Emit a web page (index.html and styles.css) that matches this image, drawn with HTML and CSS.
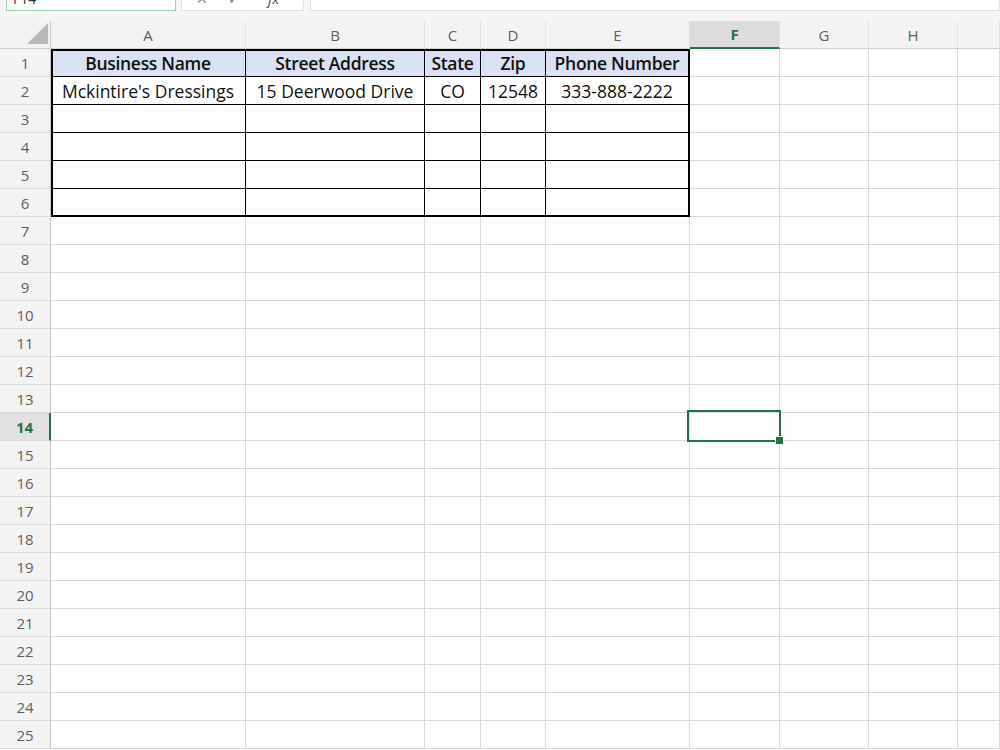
FILE: index.html
```html
<!DOCTYPE html>
<html lang="en">
    <head>
        <meta name="viewport" content="width=device-width, initial-scale=1">
        <title>Book1 - Excel</title>
        <link rel="stylesheet" href="styles.css">
    </head>
    <body>
        <div class="formulaBar">
            <div class="nameBox">F14</div>
            <div class="fxBox"><span>&#x2715;</span><span>&#x2713;</span><span class="fx">fx</span></div>
            <div class="formulaInput"></div>
        </div>
        <div class="sheet">
            <div class="row colHeads">
                <div class="c rh corner">
                    <svg width="21" height="21" viewBox="0 0 21 21"><polygon points="21,0 21,21 0,21" fill="#b9b9b9"/></svg>
                </div>
                <div class="c a">A</div>
                <div class="c b">B</div>
                <div class="c cc">C</div>
                <div class="c d">D</div>
                <div class="c e">E</div>
                <div class="c f active">F</div>
                <div class="c g">G</div>
                <div class="c h">H</div>
                <div class="c i"></div>
            </div>
            <div class="row">
                <div class="c rh">1</div>
                <div class="c a t head top first">Business Name</div>
                <div class="c b t head top">Street Address</div>
                <div class="c cc t head top">State</div>
                <div class="c d t head top">Zip</div>
                <div class="c e t head top last">Phone Number</div>
                <div class="c f"></div><div class="c g"></div><div class="c h"></div><div class="c i"></div>
            </div>
            <div class="row">
                <div class="c rh">2</div>
                <div class="c a t first">Mckintire's Dressings</div>
                <div class="c b t">15 Deerwood Drive</div>
                <div class="c cc t">CO</div>
                <div class="c d t">12548</div>
                <div class="c e t last">333-888-2222</div>
                <div class="c f"></div><div class="c g"></div><div class="c h"></div><div class="c i"></div>
            </div>
            <div class="row">
                <div class="c rh">3</div>
                <div class="c a t first"></div><div class="c b t"></div><div class="c cc t"></div><div class="c d t"></div><div class="c e t last"></div>
                <div class="c f"></div><div class="c g"></div><div class="c h"></div><div class="c i"></div>
            </div>
            <div class="row">
                <div class="c rh">4</div>
                <div class="c a t first"></div><div class="c b t"></div><div class="c cc t"></div><div class="c d t"></div><div class="c e t last"></div>
                <div class="c f"></div><div class="c g"></div><div class="c h"></div><div class="c i"></div>
            </div>
            <div class="row">
                <div class="c rh">5</div>
                <div class="c a t first"></div><div class="c b t"></div><div class="c cc t"></div><div class="c d t"></div><div class="c e t last"></div>
                <div class="c f"></div><div class="c g"></div><div class="c h"></div><div class="c i"></div>
            </div>
            <div class="row">
                <div class="c rh">6</div>
                <div class="c a t first bottom"></div><div class="c b t bottom"></div><div class="c cc t bottom"></div><div class="c d t bottom"></div><div class="c e t last bottom"></div>
                <div class="c f"></div><div class="c g"></div><div class="c h"></div><div class="c i"></div>
            </div>
            <div class="row">
                <div class="c rh">7</div>
                <div class="c a"></div><div class="c b"></div><div class="c cc"></div><div class="c d"></div><div class="c e"></div>
                <div class="c f"></div><div class="c g"></div><div class="c h"></div><div class="c i"></div>
            </div>
            <div class="row">
                <div class="c rh">8</div>
                <div class="c a"></div><div class="c b"></div><div class="c cc"></div><div class="c d"></div><div class="c e"></div>
                <div class="c f"></div><div class="c g"></div><div class="c h"></div><div class="c i"></div>
            </div>
            <div class="row">
                <div class="c rh">9</div>
                <div class="c a"></div><div class="c b"></div><div class="c cc"></div><div class="c d"></div><div class="c e"></div>
                <div class="c f"></div><div class="c g"></div><div class="c h"></div><div class="c i"></div>
            </div>
            <div class="row">
                <div class="c rh">10</div>
                <div class="c a"></div><div class="c b"></div><div class="c cc"></div><div class="c d"></div><div class="c e"></div>
                <div class="c f"></div><div class="c g"></div><div class="c h"></div><div class="c i"></div>
            </div>
            <div class="row">
                <div class="c rh">11</div>
                <div class="c a"></div><div class="c b"></div><div class="c cc"></div><div class="c d"></div><div class="c e"></div>
                <div class="c f"></div><div class="c g"></div><div class="c h"></div><div class="c i"></div>
            </div>
            <div class="row">
                <div class="c rh">12</div>
                <div class="c a"></div><div class="c b"></div><div class="c cc"></div><div class="c d"></div><div class="c e"></div>
                <div class="c f"></div><div class="c g"></div><div class="c h"></div><div class="c i"></div>
            </div>
            <div class="row">
                <div class="c rh">13</div>
                <div class="c a"></div><div class="c b"></div><div class="c cc"></div><div class="c d"></div><div class="c e"></div>
                <div class="c f"></div><div class="c g"></div><div class="c h"></div><div class="c i"></div>
            </div>
            <div class="row">
                <div class="c rh active">14</div>
                <div class="c a"></div><div class="c b"></div><div class="c cc"></div><div class="c d"></div><div class="c e"></div>
                <div class="c f selected"></div><div class="c g"></div><div class="c h"></div><div class="c i"></div>
            </div>
            <div class="row">
                <div class="c rh">15</div>
                <div class="c a"></div><div class="c b"></div><div class="c cc"></div><div class="c d"></div><div class="c e"></div>
                <div class="c f"></div><div class="c g"></div><div class="c h"></div><div class="c i"></div>
            </div>
            <div class="row">
                <div class="c rh">16</div>
                <div class="c a"></div><div class="c b"></div><div class="c cc"></div><div class="c d"></div><div class="c e"></div>
                <div class="c f"></div><div class="c g"></div><div class="c h"></div><div class="c i"></div>
            </div>
            <div class="row">
                <div class="c rh">17</div>
                <div class="c a"></div><div class="c b"></div><div class="c cc"></div><div class="c d"></div><div class="c e"></div>
                <div class="c f"></div><div class="c g"></div><div class="c h"></div><div class="c i"></div>
            </div>
            <div class="row">
                <div class="c rh">18</div>
                <div class="c a"></div><div class="c b"></div><div class="c cc"></div><div class="c d"></div><div class="c e"></div>
                <div class="c f"></div><div class="c g"></div><div class="c h"></div><div class="c i"></div>
            </div>
            <div class="row">
                <div class="c rh">19</div>
                <div class="c a"></div><div class="c b"></div><div class="c cc"></div><div class="c d"></div><div class="c e"></div>
                <div class="c f"></div><div class="c g"></div><div class="c h"></div><div class="c i"></div>
            </div>
            <div class="row">
                <div class="c rh">20</div>
                <div class="c a"></div><div class="c b"></div><div class="c cc"></div><div class="c d"></div><div class="c e"></div>
                <div class="c f"></div><div class="c g"></div><div class="c h"></div><div class="c i"></div>
            </div>
            <div class="row">
                <div class="c rh">21</div>
                <div class="c a"></div><div class="c b"></div><div class="c cc"></div><div class="c d"></div><div class="c e"></div>
                <div class="c f"></div><div class="c g"></div><div class="c h"></div><div class="c i"></div>
            </div>
            <div class="row">
                <div class="c rh">22</div>
                <div class="c a"></div><div class="c b"></div><div class="c cc"></div><div class="c d"></div><div class="c e"></div>
                <div class="c f"></div><div class="c g"></div><div class="c h"></div><div class="c i"></div>
            </div>
            <div class="row">
                <div class="c rh">23</div>
                <div class="c a"></div><div class="c b"></div><div class="c cc"></div><div class="c d"></div><div class="c e"></div>
                <div class="c f"></div><div class="c g"></div><div class="c h"></div><div class="c i"></div>
            </div>
            <div class="row">
                <div class="c rh">24</div>
                <div class="c a"></div><div class="c b"></div><div class="c cc"></div><div class="c d"></div><div class="c e"></div>
                <div class="c f"></div><div class="c g"></div><div class="c h"></div><div class="c i"></div>
            </div>
            <div class="row">
                <div class="c rh">25</div>
                <div class="c a"></div><div class="c b"></div><div class="c cc"></div><div class="c d"></div><div class="c e"></div>
                <div class="c f"></div><div class="c g"></div><div class="c h"></div><div class="c i"></div>
            </div>
        </div>
    </body>
</html>
```

FILE: styles.css
```css
body, html {
    padding: 0;
    margin: 0;
    background: #fff;
    overflow: hidden;
}
* {
    box-sizing: border-box;
}
.formulaBar {
    height: 21px;
    display: flex;
    align-items: flex-start;
    background: #f5f5f5;
    padding-left: 6px;
    overflow: hidden;
}
.nameBox, .fxBox, .formulaInput {
    margin-top: -14px;
    height: 25px;
    background: #fff;
    border: 1px solid #e1e1e1;
    display: flex;
    align-items: center;
    font-family: "Open Sans", sans-serif;
    font-size: 14px;
    color: #333;
    overflow: hidden;
}
.nameBox {
    width: 170px;
    border-color: #9ed3b4;
    padding-left: 6px;
}
.fxBox {
    width: 123px;
    margin-left: 5px;
    padding-left: 14px;
    gap: 20px;
    color: #8a8a8a;
}
.fxBox .fx {
    margin-left: 8px;
    font-style: italic;
    color: #444;
}
.formulaInput {
    flex: 1;
    margin-left: 6px;
}
.sheet {
    display: flex;
    flex-direction: column;
}
.row {
    display: flex;
    height: 28px;
}
.c {
    height: 28px;
    border-right: 1px solid #dadada;
    border-bottom: 1px solid #dadada;
    display: flex;
    align-items: center;
    justify-content: center;
    font-family: "Open Sans", sans-serif;
    font-size: 17.5px;
    color: #111;
    white-space: nowrap;
}
.rh {
    width: 51px;
    background: #f3f3f3;
    border-right-color: #c8c8c8;
    font-family: "Open Sans", sans-serif;
    font-size: 15px;
    color: #5e5e5e;
}
.a { width: 195px; }
.b { width: 179px; }
.cc { width: 56px; }
.d { width: 65px; }
.e { width: 144px; }
.f { width: 90px; }
.g { width: 89px; }
.h { width: 89px; }
.i { flex: 1; }
.colHeads .c {
    background: #f3f3f3;
    border-right-color: #e3e3e3;
    border-bottom-color: #cfcfcf;
    font-family: "Open Sans", sans-serif;
    font-size: 15px;
    color: #5e5e5e;
}
.colHeads .corner {
    justify-content: flex-end;
    align-items: flex-end;
    padding: 0 2px 4px 0;
    border-right-color: #c8c8c8;
}
.colHeads .active {
    background: #dcdcdc;
    border-bottom: 2px solid #217346;
    color: #217346;
    font-weight: bold;
}
.rh.active {
    background: #e1e1e1;
    border-right: 2px solid #217346;
    color: #217346;
    font-weight: bold;
}
/* table borders */
.t {
    border-right-color: #000;
    border-bottom-color: #000;
}
.t.head {
    background: #d9e1f2;
    font-weight: 600;
    letter-spacing: -0.3px;
}
.t.top {
    box-shadow: inset 0 2px 0 #000;
}
.t.first {
    box-shadow: inset 2px 0 0 #000;
}
.t.top.first {
    box-shadow: inset 2px 2px 0 #000;
}
.t.last {
    border-right-width: 2px;
}
.t.bottom {
    border-bottom-width: 2px;
}
.selected {
    position: relative;
}
.selected::after {
    content: "";
    position: absolute;
    top: -3px;
    left: -3px;
    right: -2px;
    bottom: -2px;
    border: 2px solid #217346;
}
.selected::before {
    content: "";
    position: absolute;
    right: -5px;
    bottom: -5px;
    width: 7px;
    height: 7px;
    background: #217346;
    border: 1px solid #fff;
    z-index: 2;
}
```
